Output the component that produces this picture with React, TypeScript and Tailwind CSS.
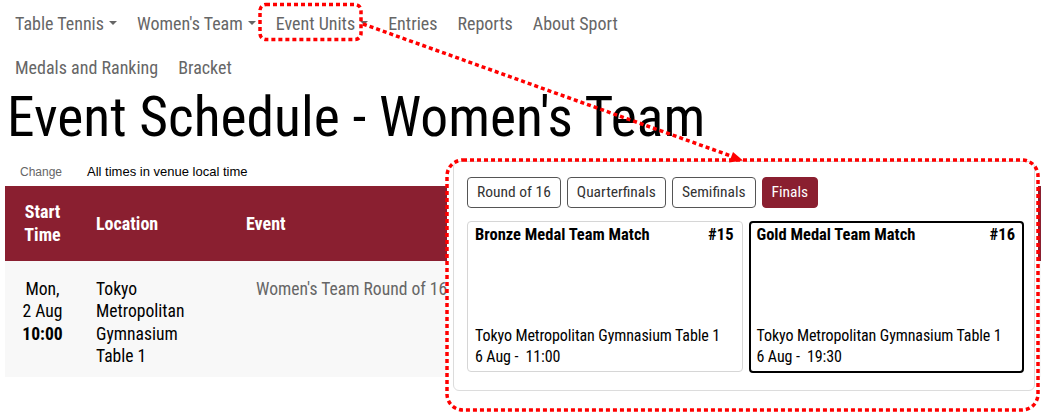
import React from "react";

const Caret = () => (
  <span className="ml-[5px] inline-block h-0 w-0 border-x-[4px] border-t-[4px] border-x-transparent border-t-[#666] align-middle" />
);

const NavItem = ({ label, caret }: { label: string; caret?: boolean }) => (
  <span className="flex items-center px-[10px]">
    {label}
    {caret && <Caret />}
  </span>
);

const Card = ({
  title,
  num,
  time,
  active,
}: {
  title: string;
  num: string;
  time: string;
  active?: boolean;
}) => (
  <div
    className={
      active
        ? "flex h-[152px] flex-col justify-between rounded-[4px] border-2 border-black pl-[6px] pr-[7px] pt-[2px] pb-[3px]"
        : "flex h-[151px] flex-col justify-between rounded-[4px] border border-[#d6d6d6] pl-[7px] pr-[8px] pt-[3px] pb-[3px]"
    }
  >
    <div className="flex justify-between text-[16.5px] font-bold leading-[20px] text-black">
      <span>{title}</span>
      <span>{num}</span>
    </div>
    <div className="whitespace-nowrap text-[16px] leading-[21.6px] tracking-[-0.1px] text-black">
      <div>Tokyo Metropolitan Gymnasium Table 1</div>
      <div>6 Aug -&nbsp; {time}</div>
    </div>
  </div>
);

export default function App() {
  return (
    <div className="relative h-[412px] w-[1041px] overflow-hidden bg-white font-['Liberation_Sans_Narrow','Roboto_Condensed',Roboto,sans-serif] text-black">
      <nav className="pl-[5px] text-[18px] text-[#666]">
        <div className="flex h-[45px] items-center pt-[1px]">
          <NavItem label="Table Tennis" caret />
          <NavItem label="Women's Team" caret />
          <NavItem label="Event Units" caret />
          <NavItem label="Entries" />
          <NavItem label="Reports" />
          <NavItem label="About Sport" />
        </div>
        <div className="flex h-[45px] items-center">
          <NavItem label="Medals and Ranking" />
          <NavItem label="Bracket" />
        </div>
      </nav>

      <h1 className="pl-[7px] text-[55.5px] leading-none font-normal">Event Schedule - Women's Team</h1>

      <div className="mt-[16px] flex h-[20px] items-center pl-[20px] font-['Liberation_Sans',Arial,sans-serif]">
        <span className="text-[12px] text-[#666]">Change</span>
        <span className="ml-[25px] text-[13px] text-black">All times in venue local time</span>
      </div>

      <div className="ml-[5px] mt-[4px]">
        <div className="flex h-[75px] items-center bg-[#8a1f30] text-[18px] font-bold leading-[23px] text-white">
          <div className="w-[75px] text-center">
            Start
            <br />
            Time
          </div>
          <div className="ml-[16px] w-[150px]">Location</div>
          <div>Event</div>
        </div>
        <div className="flex bg-[#f8f8f8] pt-[17px] pb-[9px] text-[17.6px] leading-[22.5px] text-black">
          <div className="w-[75px] text-center">
            Mon,
            <br />2 Aug
            <br />
            <span className="font-bold">10:00</span>
          </div>
          <div className="ml-[16px] w-[150px]">
            Tokyo
            <br />
            Metropolitan
            <br />
            Gymnasium
            <br />
            Table 1
          </div>
          <div className="whitespace-nowrap pl-[10px] text-[#666]">Women's Team Round of 16</div>
        </div>
      </div>

      <div className="absolute left-[447px] top-[160px] flex h-[250px] w-[591px] flex-col bg-white pl-[6px] pr-[3px] pt-[1px] pb-[19px]">
        <div className="flex flex-1 flex-col rounded-[6px] border border-[#dcdcdc] bg-white pl-[13px] pr-[10px] pt-[15px]">
          <div className="flex gap-[6px] text-[15.5px]">
            <span className="flex h-[31px] items-center rounded-[4px] border border-[#555] px-[9px] text-[#333]">Round of 16</span>
            <span className="flex h-[31px] items-center rounded-[4px] border border-[#555] px-[9px] text-[#333]">Quarterfinals</span>
            <span className="flex h-[31px] items-center rounded-[4px] border border-[#555] px-[9px] text-[#333]">Semifinals</span>
            <span className="flex h-[31px] items-center rounded-[4px] border border-[#8a1f30] bg-[#8a1f30] px-[9px] text-white">Finals</span>
          </div>
          <div className="mt-[13px] grid grid-cols-2 items-start gap-[6px]">
            <Card title="Bronze Medal Team Match" num="#15" time="11:00" />
            <Card title="Gold Medal Team Match" num="#16" time="19:30" active />
          </div>
        </div>
      </div>

      <svg className="pointer-events-none absolute left-0 top-0" width="1041" height="412" viewBox="0 0 1041 412">
        <g fill="none" stroke="#ff0000" strokeWidth="3.5" strokeDasharray="4 3">
          <rect x="260" y="4.5" width="101" height="35" rx="6" />
          <line x1="363" y1="24" x2="731" y2="156" />
          <rect x="447" y="160" width="591" height="250" rx="16" />
        </g>
        <polygon points="743,160.5 729,162.5 733,152" fill="#ff0000" />
      </svg>
    </div>
  );
}
